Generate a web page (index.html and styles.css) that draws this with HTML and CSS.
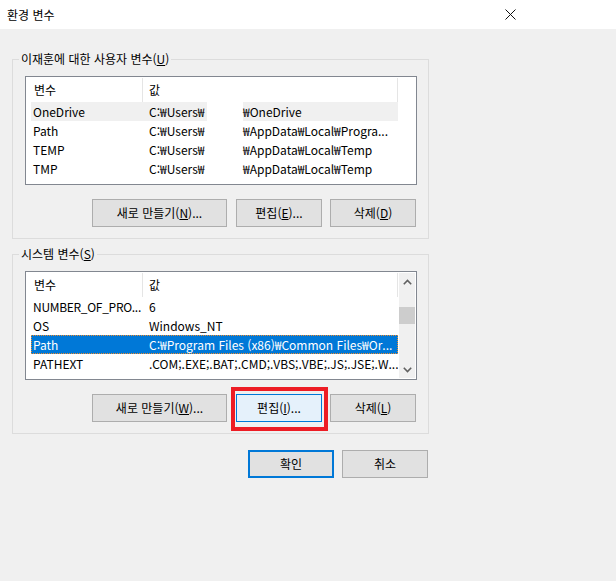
FILE: index.html
```html
<!DOCTYPE html>
<html lang="ko">
<head>
<meta charset="utf-8">
<title>환경 변수</title>
<link rel="stylesheet" href="styles.css">
</head>
<body>
<div class="window">
  <div class="titlebar">
    <span class="title">환경 변수</span>
    <span class="close"><svg width="11" height="11" viewBox="0 0 11 11"><path d="M0.5 0.5 L10.5 10.5 M10.5 0.5 L0.5 10.5" stroke="#111" stroke-width="1" fill="none"/></svg></span>
  </div>
  <div class="content">
    <fieldset class="group">
      <legend>이재훈에 대한 사용자 변수(<u>U</u>)</legend>
      <div class="listview">
        <div class="table">
          <div class="row head"><div class="c1">변수</div><div class="c2">값</div></div>
          <div class="row hover"><div class="c1">OneDrive</div><div class="c2"><span class="pre">C:₩Users₩</span><span class="redact"></span><span class="post">₩OneDrive</span></div></div>
          <div class="row"><div class="c1">Path</div><div class="c2"><span class="pre">C:₩Users₩</span><span class="redact"></span><span class="post">₩AppData₩Local₩Progra...</span></div></div>
          <div class="row"><div class="c1">TEMP</div><div class="c2"><span class="pre">C:₩Users₩</span><span class="redact"></span><span class="post">₩AppData₩Local₩Temp</span></div></div>
          <div class="row"><div class="c1">TMP</div><div class="c2"><span class="pre">C:₩Users₩</span><span class="redact"></span><span class="post">₩AppData₩Local₩Temp</span></div></div>
        </div>
      </div>
      <div class="buttons">
        <button class="btn wide">새로 만들기(<u>N</u>)...</button>
        <button class="btn mid">편집(<u>E</u>)...</button>
        <button class="btn">삭제(<u>D</u>)</button>
      </div>
    </fieldset>

    <fieldset class="group second">
      <legend>시스템 변수(<u>S</u>)</legend>
      <div class="listview">
        <div class="table">
          <div class="row head"><div class="c1">변수</div><div class="c2">값</div></div>
          <div class="row"><div class="c1 tight">NUMBER_OF_PRO...</div><div class="c2">6</div></div>
          <div class="row"><div class="c1">OS</div><div class="c2">Windows_NT</div></div>
          <div class="row selected"><div class="c1">Path</div><div class="c2">C:₩Program Files (x86)₩Common Files₩Or...</div></div>
          <div class="row"><div class="c1">PATHEXT</div><div class="c2">.COM;.EXE;.BAT;.CMD;.VBS;.VBE;.JS;.JSE;.W...</div></div>
        </div>
        <div class="scrollbar">
          <div class="arrow"><svg width="9" height="6" viewBox="0 0 9 6"><path d="M0.8 5.2 L4.5 1.5 L8.2 5.2" stroke="#606060" stroke-width="1.6" fill="none"/></svg></div>
          <div class="track"><div class="thumb"></div></div>
          <div class="arrow"><svg width="9" height="6" viewBox="0 0 9 6"><path d="M0.8 0.8 L4.5 4.5 L8.2 0.8" stroke="#606060" stroke-width="1.6" fill="none"/></svg></div>
        </div>
      </div>
      <div class="buttons">
        <button class="btn wide">새로 만들기(<u>W</u>)...</button>
        <span class="marked"><button class="btn focus">편집(<u>I</u>)...</button></span>
        <button class="btn">삭제(<u>L</u>)</button>
      </div>
    </fieldset>

    <div class="dialog-buttons">
      <button class="btn default">확인</button>
      <button class="btn">취소</button>
    </div>
  </div>
</div>
</body>
</html>
```

FILE: styles.css
```css
*, *::before, *::after { box-sizing: border-box; }

html, body {
  margin: 0;
  padding: 0;
  background: #f0f0f0;
}

body {
  font-family: "Noto Sans CJK KR", "Noto Sans", sans-serif;
  font-size: 12px;
  color: #000;
  width: 616px;
  height: 581px;
  overflow: hidden;
}

.titlebar {
  height: 29px;
  background: #fff;
  display: flex;
  align-items: center;
  justify-content: space-between;
  padding: 0 100px 0 7px;
}

.title {
  font-size: 12px;
  line-height: 14px;
}

.close {
  display: flex;
  width: 11px;
  height: 11px;
}

.content {
  padding: 23px 0 0 12px;
  width: 429px;
}

.group {
  margin: 0;
  padding: 10px 11px 11px 12px;
  border: 1px solid #dcdcdc;
  min-width: 0;
}

.group.second {
  margin-top: 8px;
}

.group legend {
  margin-left: -6px;
  padding: 0 2px;
  line-height: 14px;
  font-size: 12px;
}

.listview {
  height: 109px;
  border: 1px solid #828790;
  background: #fff;
  display: flex;
}

.table {
  width: 372px;
}

.row {
  display: flex;
  height: 19px;
  line-height: 19px;
  margin-left: 5px;
  width: 367px;
  white-space: nowrap;
}

.row .c1 {
  width: 112px;
  padding-left: 2px;
  overflow: hidden;
}

.row .c1.tight {
  letter-spacing: -0.3px;
}

.row .c2 {
  width: 255px;
  padding-left: 6px;
  overflow: hidden;
  display: flex;
}

.row.head {
  height: 25px;
  line-height: 24px;
}

.row.head .c1 {
  padding-left: 3px;
  border-right: 1px solid #e5e5e5;
  width: 112px;
  margin-top: 1px;
}

.row.head .c2 {
  border-right: 1px solid #e5e5e5;
  margin-top: 1px;
}

.row.hover {
  background: #f0f0f0;
}

.row.selected {
  background: #0078d7;
  color: #fff;
  outline: 1px dotted #f08c2c;
  outline-offset: -1px;
}

.pre {
  display: inline-block;
  width: 58px;
  flex: none;
}

.redact {
  display: inline-block;
  width: 36px;
  height: 19px;
  background: #fff;
  flex: none;
}

.post {
  flex: none;
}

.scrollbar {
  width: 18px;
  padding: 1px;
  display: flex;
  flex-direction: column;
}

.scrollbar .arrow {
  height: 17px;
  background: #f0f0f0;
  display: flex;
  align-items: center;
  justify-content: center;
}

.scrollbar .track {
  flex: 1;
  background: #f0f0f0;
}

.scrollbar .thumb {
  height: 17px;
  margin-top: 17px;
  background: #cdcdcd;
}

.buttons {
  display: flex;
  justify-content: flex-end;
  margin-top: 14px;
  padding-right: 1px;
}

.btn {
  font-family: "Noto Sans CJK KR", "Noto Sans", sans-serif;
  font-size: 12px;
  color: #000;
  height: 28px;
  width: 86px;
  padding: 0;
  background: #e1e1e1;
  border: 1px solid #adadad;
  border-radius: 0;
  line-height: 14px;
}

.btn.wide {
  width: 135px;
  margin-right: 9px;
}

.btn.mid {
  margin-right: 8px;
}

.btn.focus {
  background: #e5f1fb;
  border-color: #0078d7;
  display: block;
}

.marked {
  position: relative;
  margin-right: 8px;
}

.marked::after {
  content: "";
  position: absolute;
  left: -5px;
  top: -7px;
  width: 97px;
  height: 44px;
  border: 4px solid #ed1c24;
  pointer-events: none;
}

.dialog-buttons {
  display: flex;
  justify-content: flex-end;
  gap: 8px;
  margin-top: 16px;
  padding-right: 1px;
}

.btn.default {
  border: 2px solid #0078d7;
}
```
